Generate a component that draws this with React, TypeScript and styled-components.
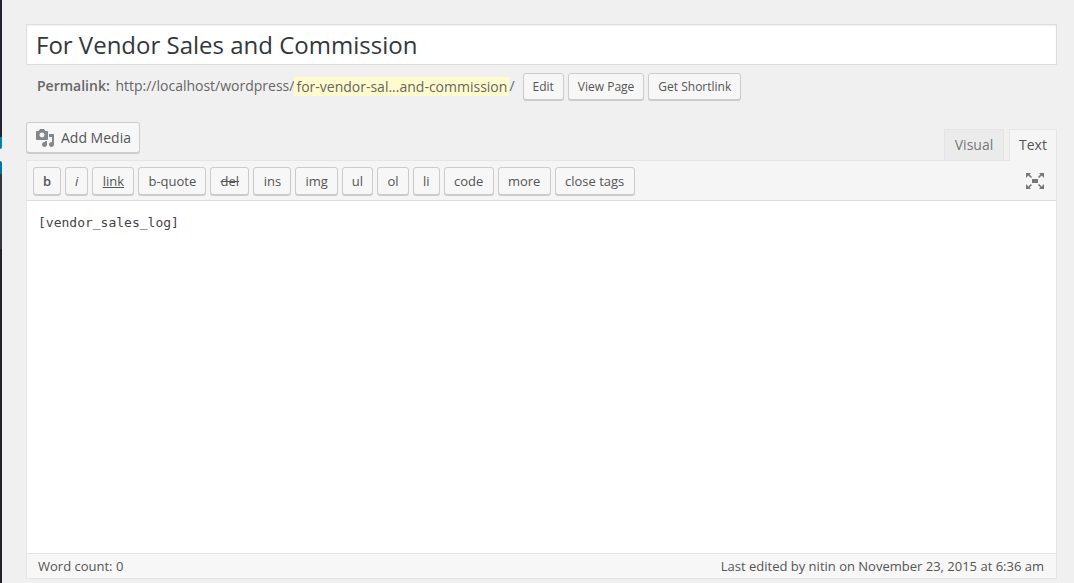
import React from "react";
import styled, { createGlobalStyle } from "styled-components";

const GlobalStyle = createGlobalStyle`
  * { box-sizing: border-box; }
  body {
    margin: 0;
    background: #f0f0f0;
    color: #444;
    font-family: "Open Sans", "Noto Sans", sans-serif;
    font-size: 13px;
    line-height: 18px;
  }
  button, input, textarea { font-family: inherit; margin: 0; }
`;

const Page = styled.div`
  display: flex;
  min-height: 100vh;
`;

const MenuEdge = styled.div`
  display: flex;
  flex-direction: column;
  flex: 0 0 2px;
`;

const EdgePart = styled.span<{ $color: string; $height?: number; $round?: string }>`
  flex: ${(p) => (p.$height ? `0 0 ${p.$height}px` : "1")};
  background: ${(p) => p.$color};
  border-radius: ${(p) => p.$round ?? "0"};
`;

const Main = styled.main`
  flex: 1;
  min-width: 0;
  padding: 24px 17px 4px 24px;
  display: flex;
  flex-direction: column;
`;

const TitleInput = styled.input`
  width: 100%;
  height: 41px;
  padding: 0 9px;
  border: 1px solid #ddd;
  border-radius: 0;
  background: #fff;
  box-shadow: inset 0 1px 2px rgba(0, 0, 0, 0.07);
  color: #32373c;
  font-size: 24px;
  outline: none;
`;

const Permalink = styled.div`
  display: flex;
  align-items: flex-start;
  gap: 4px;
  padding: 8px 11px 0;
  color: #666;
  font-size: 14px;
  line-height: 26px;

  strong {
    margin-right: 2px;
    font-weight: 600;
  }
`;

const Address = styled.span`
  display: flex;
  align-items: center;
  margin-right: 4px;
`;

const Slug = styled.span`
  padding: 0 2px;
  background: #fffbcc;
  line-height: 19px;
`;

const Button = styled.button`
  height: 27px;
  padding: 0 9px;
  border: 1px solid #ccc;
  border-radius: 3px;
  background: #f7f7f7;
  box-shadow: 0 1px 0 #ccc;
  color: #555;
  font-size: 12px;
  line-height: 16px;
  white-space: nowrap;
  cursor: pointer;
`;

const TagButton = styled(Button)<{
  $minWidth: number;
  $look?: "bold" | "italic" | "underline" | "strike";
}>`
  min-width: ${(p) => p.$minWidth}px;
  height: 28px;
  font-size: 13px;
  font-weight: ${(p) => (p.$look === "bold" ? 600 : 400)};
  font-style: ${(p) => (p.$look === "italic" ? "italic" : "normal")};
  text-decoration: ${(p) =>
    p.$look === "underline" ? "underline" : p.$look === "strike" ? "line-through" : "none"};
`;

const MediaButton = styled(Button)`
  display: flex;
  align-items: center;
  gap: 6px;
  height: 31px;
  padding: 0 8px;
  font-size: 14px;

  svg { fill: #82878c; }
`;

const EditorTop = styled.div`
  display: flex;
  justify-content: space-between;
  align-items: flex-end;
  margin-top: 22px;
  height: 38px;
`;

const MediaArea = styled.div`
  align-self: flex-start;
`;

const Tabs = styled.div`
  display: flex;
  gap: 5px;
`;

const Tab = styled.button<{ $active?: boolean }>`
  height: ${(p) => (p.$active ? 32 : 31)}px;
  min-width: ${(p) => (p.$active ? 48 : 60)}px;
  margin-bottom: ${(p) => (p.$active ? -1 : 0)}px;
  padding: 0 9px 2px;
  border: 1px solid #e5e5e5;
  border-bottom: 0;
  background: ${(p) => (p.$active ? "#f5f5f5" : "#ebebeb")};
  color: ${(p) => (p.$active ? "#555" : "#777")};
  font-size: 14px;
  position: relative;
  cursor: pointer;
`;

const Editor = styled.section`
  flex: 1;
  display: flex;
  flex-direction: column;
  border: 1px solid #e5e5e5;
`;

const Toolbar = styled.div`
  display: flex;
  justify-content: space-between;
  align-items: flex-start;
  padding: 6px 11px 5px 6px;
  border-bottom: 1px solid #ddd;
  background: #f5f5f5;
`;

const TagList = styled.div`
  display: flex;
  flex-wrap: wrap;
  gap: 4px;
`;

const IconButton = styled.button`
  display: flex;
  padding: 5px 0;
  border: 0;
  background: none;
  cursor: pointer;
`;

const Content = styled.textarea`
  flex: 1;
  min-height: 300px;
  padding: 13px 11px;
  border: 0;
  background: #fff;
  color: #444;
  font-family: "DejaVu Sans Mono", monospace;
  font-size: 13px;
  line-height: 18px;
  resize: none;
  outline: none;
`;

const StatusBar = styled.footer`
  display: flex;
  justify-content: space-between;
  padding: 3px 12px 3px 11px;
  border-top: 1px solid #e5e5e5;
  background: #f7f7f7;
  color: #555;
`;

const MediaIcon = () => (
  <svg width="20" height="20" viewBox="0 0 20 20" aria-hidden="true">
    <path d="M13 11V4c0-.55-.45-1-1-1h-1.670L9 1H5L3.670 3H2c-.55 0-1 .45-1 1v7c0 .55.45 1 1 1h10c.55 0 1-.45 1-1zM7 4.500c1.380 0 2.500 1.120 2.500 2.500S8.380 9.500 7 9.500 4.500 8.380 4.500 7 5.620 4.500 7 4.500zM14 6h5v10.500c0 1.380-1.120 2.500-2.500 2.500S14 17.880 14 16.500s1.120-2.500 2.500-2.500c.17 0 .34.020.500.050V9h-3V6zm-4 8.050V13h2v3.500c0 1.380-1.120 2.500-2.500 2.500S7 17.880 7 16.500 8.120 14 9.500 14c.17 0 .34.020.500.050z" />
  </svg>
);

const ExpandIcon = () => (
  <svg width="20" height="18" viewBox="0 0 20 18" aria-hidden="true">
    <path
      fill="#777"
      d="M1 1h5L4.600 2.400 7 4.900 5.900 6 3.400 3.600 1 6zM19 1v5L16.600 3.600 14.100 6 13 4.900 15.400 2.400 14 1zM1 17v-5L3.400 14.400 5.900 12 7 13.100 4.600 15.600 6 17zM19 17h-5L15.400 15.600 13 13.100 14.100 12 16.600 14.400 19 12zM7 7h6v4H7z"
    />
  </svg>
);

const tags: {
  label: string;
  minWidth: number;
  look?: "bold" | "italic" | "underline" | "strike";
}[] = [
  { label: "b", minWidth: 28, look: "bold" },
  { label: "i", minWidth: 23, look: "italic" },
  { label: "link", minWidth: 42, look: "underline" },
  { label: "b-quote", minWidth: 68 },
  { label: "del", minWidth: 39, look: "strike" },
  { label: "ins", minWidth: 38 },
  { label: "img", minWidth: 42 },
  { label: "ul", minWidth: 31 },
  { label: "ol", minWidth: 32 },
  { label: "li", minWidth: 26 },
  { label: "code", minWidth: 50 },
  { label: "more", minWidth: 53 },
  { label: "close tags", minWidth: 80 },
];

export default function App() {
  return (
    <Page>
      <GlobalStyle />
      <MenuEdge>
        <EdgePart $color="#23232b" $height={137} />
        <EdgePart $color="#0083ad" $height={12} $round="0 0 2px 0" />
        <EdgePart $color="#f0f0f0" $height={12} />
        <EdgePart $color="#0074a2" $height={13} $round="0 2px 0 0" />
        <EdgePart $color="#33363b" $height={75} />
        <EdgePart $color="#222229" />
      </MenuEdge>
      <Main>
        <TitleInput aria-label="Title" defaultValue="For Vendor Sales and Commission" />
        <Permalink>
          <Address>
            <span>
              <strong>Permalink:</strong> http://localhost/wordpress/
            </span>
            <Slug>for-vendor-sal...and-commission</Slug>/
          </Address>
          <Button type="button">Edit</Button>
          <Button type="button">View Page</Button>
          <Button type="button">Get Shortlink</Button>
        </Permalink>
        <EditorTop>
          <MediaArea>
            <MediaButton type="button">
              <MediaIcon />
              Add Media
            </MediaButton>
          </MediaArea>
          <Tabs>
            <Tab type="button">Visual</Tab>
            <Tab type="button" $active>Text</Tab>
          </Tabs>
        </EditorTop>
        <Editor>
          <Toolbar>
            <TagList>
              {tags.map((t) => (
                <TagButton key={t.label} type="button" $minWidth={t.minWidth} $look={t.look}>
                  {t.label}
                </TagButton>
              ))}
            </TagList>
            <IconButton type="button" aria-label="Distraction-free writing mode">
              <ExpandIcon />
            </IconButton>
          </Toolbar>
          <Content aria-label="Content" spellCheck={false} defaultValue="[vendor_sales_log]" />
          <StatusBar>
            <span>Word count: 0</span>
            <span>Last edited by nitin on November 23, 2015 at 6:36 am</span>
          </StatusBar>
        </Editor>
      </Main>
    </Page>
  );
}
